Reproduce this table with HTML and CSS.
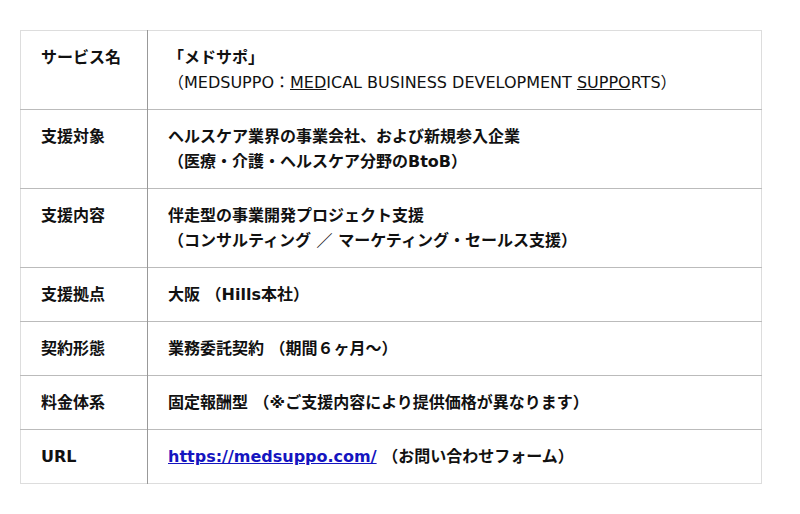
FILE: index.html
```html
<!DOCTYPE html>
<html lang="ja">
<head>
<meta charset="utf-8">
<link rel="stylesheet" href="styles.css">
</head>
<body>
<table class="info">
  <tr>
    <th>サービス名</th>
    <td><span class="b">「メドサポ」</span><br>（MEDSUPPO：<u>MED</u>ICAL BUSINESS DEVELOPMENT <u>SUPPO</u>RTS）</td>
  </tr>
  <tr>
    <th>支援対象</th>
    <td class="b">ヘルスケア業界の事業会社、および新規参入企業<br>（医療・介護・ヘルスケア分野のBtoB）</td>
  </tr>
  <tr>
    <th>支援内容</th>
    <td class="b">伴走型の事業開発プロジェクト支援<br>（コンサルティング ／ マーケティング・セールス支援）</td>
  </tr>
  <tr>
    <th>支援拠点</th>
    <td class="b">大阪 （Hills本社）</td>
  </tr>
  <tr>
    <th>契約形態</th>
    <td class="b">業務委託契約 （期間６ヶ月〜）</td>
  </tr>
  <tr>
    <th>料金体系</th>
    <td class="b">固定報酬型 （※ご支援内容により提供価格が異なります）</td>
  </tr>
  <tr>
    <th>URL</th>
    <td class="b"><a href="#" class="link">https://medsuppo.com/</a> （お問い合わせフォーム）</td>
  </tr>
</table>
</body>
</html>
```
FILE: styles.css
```css
html, body {
  margin: 0;
  padding: 0;
  background: #fff;
}
body {
  padding: 30px 38px 0 20px;
  font-family: "DejaVu Sans", "Noto Sans CJK JP", sans-serif;
  font-size: 16px;
  line-height: 25px;
  color: #111;
}
.info {
  width: 742px;
  border-collapse: collapse;
  border: 1px solid #ddd;
}
.info tr {
  border-bottom: 1px solid #bbb;
}
.info tr:last-child {
  border-bottom: 1px solid #ddd;
}
.info th, .info td {
  text-align: left;
  vertical-align: top;
  padding: 14px 20px 14px 20px;
}
.info th {
  width: 86px;
  font-weight: bold;
  border-right: 1px solid #999;
}
.b {
  font-weight: bold;
}
.link {
  color: #1515c0;
  text-decoration: underline;
}
```
